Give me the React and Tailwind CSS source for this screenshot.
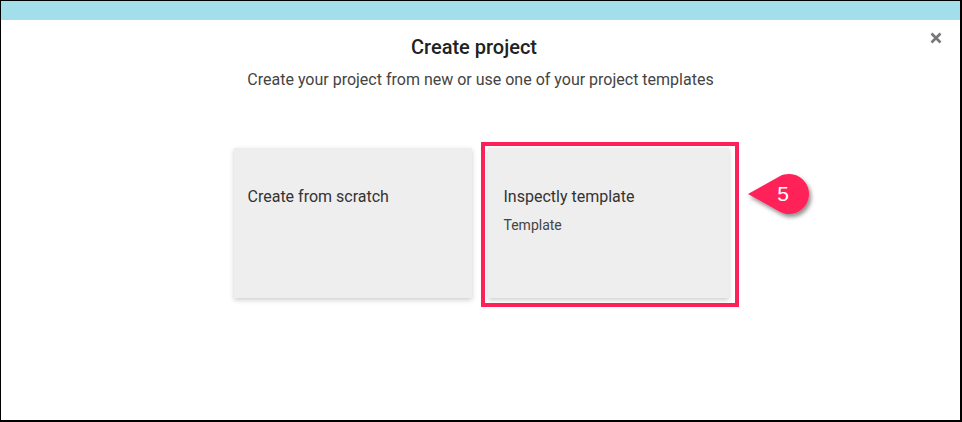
import React from 'react';

function Callout() {
  return (
    <div className="absolute left-[744px] top-[169px] w-[72px] h-[54px]">
      <svg width="72" height="54" viewBox="0 0 72 54" className="absolute inset-0">
        <defs>
          <filter id="sh" x="-20%" y="-20%" width="150%" height="160%">
            <feDropShadow dx="2" dy="3" stdDeviation="2" floodColor="#000" floodOpacity="0.45" />
          </filter>
        </defs>
        <path d="M3 24 L34.24 6.54 A20 20 0 1 1 34.24 41.46 Z" fill="#fe2159" filter="url(#sh)" />
      </svg>
      <span className="absolute left-[29px] top-[10px] w-[18px] text-center text-white text-[21px] leading-[28px] font-['Liberation_Sans',sans-serif]">
        5
      </span>
    </div>
  );
}

export default function App() {
  return (
    <div className="w-[962px] h-[422px] bg-white border-l border-r-2 border-b-2 border-t border-black flex flex-col font-['Roboto',sans-serif] relative overflow-hidden">
      {/* Top band */}
      <div className="h-[19px] bg-[#a3dfea] shrink-0" />

      {/* Close */}
      <button className="absolute right-[16px] top-[29px] text-[#777] w-[16px] h-[16px] flex items-center justify-center">
        <svg width="12" height="12" viewBox="0 0 12 12">
          <path d="M1.5 1.5 L10.5 10.5 M10.5 1.5 L1.5 10.5" stroke="currentColor" strokeWidth="2.6" />
        </svg>
      </button>

      <div className="flex flex-col items-center pt-[14px]">
        <h2 className="mr-[13px] text-[20px] leading-[26px] font-medium text-[#222]">Create project</h2>
        <p className="mt-[9px] text-[16px] leading-[22px] text-[#444]">
          Create your project from new or use one of your project templates
        </p>
      </div>

      <div className="relative flex justify-center gap-[16px] mt-[57px] pl-[1px]">
        <div className="w-[238px] h-[150px] bg-[#eeeeee] shadow-[0_2px_5px_rgba(0,0,0,0.2)] px-[14px] pt-[38px]">
          <div className="text-[16px] leading-[22px] text-[#333]">Create from scratch</div>
        </div>
        <div className="relative w-[241px] h-[150px] bg-[#eeeeee] shadow-[0_2px_5px_rgba(0,0,0,0.2)] px-[16px] pt-[38px]">
          <div className="text-[16px] leading-[22px] text-[#333]">Inspectly template</div>
          <div className="mt-[8px] text-[14px] leading-[18px] text-[#444]">Template</div>
          <div className="absolute -left-[7px] -top-[6px] -right-[10px] -bottom-[9px] border-[4px] border-[#fe2159]" />
        </div>
      </div>

      <Callout />
    </div>
  );
}
